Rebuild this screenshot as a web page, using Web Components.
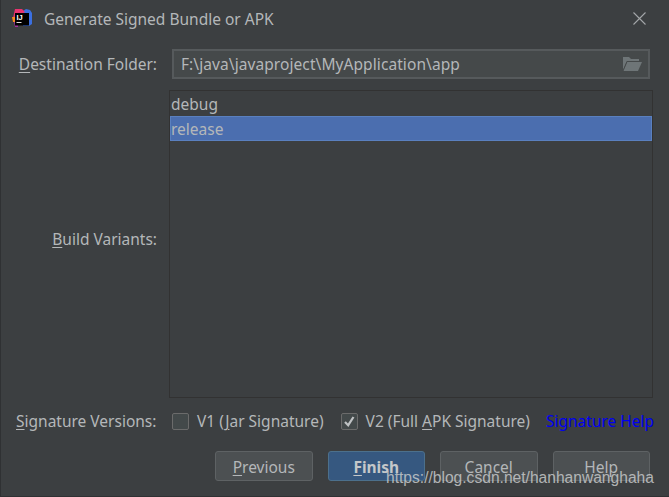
<!DOCTYPE html>
<html>
<head>
<meta charset="utf-8">
<title>Generate Signed Bundle or APK</title>
<style>
  html, body { margin: 0; padding: 0; background: #3c3f41; }
</style>
</head>
<body>
<signed-dialog></signed-dialog>

<script>
'use strict';
const FONT = '"Noto Sans", "Open Sans", sans-serif';

/**
 * Title bar with app logo and close cross
 */
class DialogTitle extends HTMLElement {
  constructor() {
    super();
    this.attachShadow({mode: 'open'}).innerHTML = `
      <style>
        :host { display: flex; align-items: center; height: 37px; padding: 0 23px 0 12px; color: #b4b7b9; }
        svg { display: block; flex: none; }
        .text { flex: 1; margin-left: 11px; }
      </style>
      <svg width="21" height="21" viewBox="0 0 21 21">
        <path d="M14 1l4 1 2 3v11l-3 2h-6V3z" fill="#3b6fe0"/>
        <path d="M3 1h7l3 3-9 6H1z" fill="#e8336f"/>
        <path d="M0 9h3v5H1z" fill="#f58a1f"/>
        <path d="M2 14h4v5H3z" fill="#a5309f"/>
        <rect x="3" y="5" width="14" height="12.5" fill="#000"/>
        <rect x="4.5" y="14" width="5" height="1" fill="#ddd"/>
        <text x="4.5" y="12" font-family="Liberation Sans" font-size="7.5" font-weight="700" fill="#fff">IJ</text>
      </svg>
      <span class="text"><slot></slot></span>
      <svg width="13" height="13" viewBox="0 0 13 13">
        <path d="M.5.5l12 12M12.5.5l-12 12" stroke="#a4a7a9" stroke-width="1.1" fill="none"/>
      </svg>
    `;
  }
}
customElements.define('dialog-title', DialogTitle);

/**
 * Path field with folder icon
 */
class PathField extends HTMLElement {
  constructor() {
    super();
    this.attachShadow({mode: 'open'}).innerHTML = `
      <style>
        :host { display: flex; align-items: center; height: 26px; padding: 0 6px 0 7px; background: #45494a; border: 2px solid #565a5c; color: #b4b7b9; }
        .text { flex: 1; letter-spacing: .08px; }
        svg { display: block; }
      </style>
      <span class="text"><slot></slot></span>
      <svg width="20" height="16" viewBox="0 0 20 16">
        <path d="M1 14V1h6l2 2h8v2H5z" fill="#6e7577"/>
        <path d="M1 15L5 6h15l-4 9z" fill="#6e7577"/>
        <path d="M1 15L5 5.5h13" stroke="#45494a" stroke-width="1" fill="none"/>
      </svg>
    `;
  }
}
customElements.define('path-field', PathField);

/**
 * Variants list, one row selected
 */
class VariantList extends HTMLElement {
  constructor() {
    super();
    this.attachShadow({mode: 'open'}).innerHTML = `
      <style>
        :host { display: block; border: 1px solid #323232; padding-top: 1px; color: #b4b7b9; }
        .row { display: flex; align-items: center; height: 24px; padding-left: 1px; }
        .row.sel { height: 23px; background: #4b6eaf; border: 1px solid #5a80bf; padding-left: 0; }
      </style>
      <div class="row">debug</div>
      <div class="row sel">release</div>
    `;
  }
}
customElements.define('variant-list', VariantList);

/**
 * Checkbox with label in slot
 */
class CheckOption extends HTMLElement {
  constructor() {
    super();
    this.attachShadow({mode: 'open'}).innerHTML = `
      <style>
        :host { display: inline-flex; align-items: center; gap: 8px; color: #b4b7b9; }
        .box { width: 15px; height: 15px; border: 1px solid #6b6b6b; border-radius: 2px; background: #43494a; display: block; }
        svg { display: block; }
      </style>
      <span class="box"><svg width="15" height="15" viewBox="0 0 15 15"></svg></span>
      <span><slot></slot></span>
    `;
  }
  connectedCallback() {
    if (this.hasAttribute('checked')) {
      this.shadowRoot.querySelector('svg').innerHTML =
        '<path d="M3 8l3.2 3.2 5.3-8.2" stroke="#bfc2c4" stroke-width="2.2" fill="none"/>';
    }
  }
}
customElements.define('check-option', CheckOption);

/**
 * Dialog button
 */
class DialogButton extends HTMLElement {
  constructor() {
    super();
    this.attachShadow({mode: 'open'}).innerHTML = `
      <style>
        :host { display: flex; align-items: center; justify-content: center; box-sizing: content-box; width: 95.5px; height: 26px; padding-top: 2px; border: 1px solid #5e6264; border-radius: 3px; background: #4c5052; color: #b4b7b9; }
        :host([primary]) { background: #365880; border-color: #4c708c; color: #c4c7c9; font-weight: 700; }
      </style>
      <slot></slot>
    `;
  }
}
customElements.define('dialog-button', DialogButton);

/**
 * Whole dialog
 */
class SignedDialog extends HTMLElement {
  constructor() {
    super();
    this.attachShadow({mode: 'open'}).innerHTML = `
      <style>
        :host { display: block; position: relative; width: 669px; height: 497px; overflow: hidden; box-sizing: border-box; background: #3c3f41; box-shadow: inset 1px -1px #2f3133; color: #b4b7b9; font: 15.5px/20px ${FONT}; }
        u { text-underline-offset: 2px; }
        .form { display: grid; grid-template-columns: 157px 1fr; padding: 0 16px 0 0; }
        .label { text-align: right; align-self: center; }
        .dest { margin: 12px 3px 0 15px; }
        .list { height: 305px; margin: 11px 0 0 12px; }
        .sig { display: flex; align-items: center; height: 20px; margin: 13px 0 0 16px; }
        .sig .name { width: 156px; }
        .sig check-option + check-option { margin-left: 17px; }
        .sig a { margin-left: 16px; color: #0000f0; }
        .buttons { display: flex; justify-content: flex-end; gap: 15px; margin: 20px 19px 0 0; }
        .mark { position: absolute; left: 386px; top: 468px; font: 15.6px/20px "Liberation Sans", sans-serif; color: #c6c8c9; opacity: .85; white-space: nowrap; }
      </style>
      <dialog-title>Generate Signed Bundle or APK</dialog-title>
      <div class="form">
        <div class="label" style="margin-top:12px"><u>D</u>estination Folder:</div>
        <path-field class="dest">F:\\java\\javaproject\\MyApplication\\app</path-field>
        <div class="label"><u>B</u>uild Variants:</div>
        <variant-list class="list"></variant-list>
      </div>
      <div class="sig">
        <span class="name"><u>S</u>ignature Versions:</span>
        <check-option>V1 (<u>J</u>ar Signature)</check-option>
        <check-option checked>V2 (Full <u>A</u>PK Signature)</check-option>
        <a>Signature Help</a>
      </div>
      <div class="buttons">
        <dialog-button><span><u>P</u>revious</span></dialog-button>
        <dialog-button primary><span><u>F</u>inish</span></dialog-button>
        <dialog-button>Cancel</dialog-button>
        <dialog-button>Help</dialog-button>
      </div>
      <div class="mark">https://blog.csdn.net/hanhanwanghaha</div>
    `;
  }
}
customElements.define('signed-dialog', SignedDialog);
</script>
</body>
</html>
